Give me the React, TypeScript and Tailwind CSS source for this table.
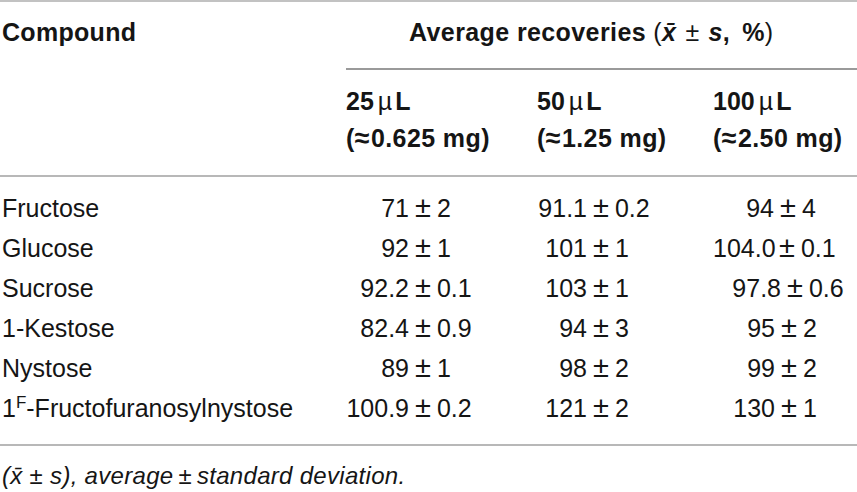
const font = { fontFamily: '"Liberation Sans", Arial, sans-serif' };

type Cell = { a: string; b: string; w: string };

const rows: { name: React.ReactNode; cells: Cell[] }[] = [
  {
    name: "Fructose",
    cells: [
      { a: "71", b: "2", w: "w-[63px]" },
      { a: "91.1", b: "0.2", w: "w-[50px]" },
      { a: "94", b: "4", w: "w-[61px]" },
    ],
  },
  {
    name: "Glucose",
    cells: [
      { a: "92", b: "1", w: "w-[63px]" },
      { a: "101", b: "1", w: "w-[50px]" },
      { a: "104.0", b: "0.1", w: "w-[60px]" },
    ],
  },
  {
    name: "Sucrose",
    cells: [
      { a: "92.2", b: "0.1", w: "w-[63px]" },
      { a: "103", b: "1", w: "w-[50px]" },
      { a: "97.8", b: "0.6", w: "w-[68px]" },
    ],
  },
  {
    name: "1-Kestose",
    cells: [
      { a: "82.4", b: "0.9", w: "w-[63px]" },
      { a: "94", b: "3", w: "w-[50px]" },
      { a: "95", b: "2", w: "w-[62px]" },
    ],
  },
  {
    name: "Nystose",
    cells: [
      { a: "89", b: "1", w: "w-[63px]" },
      { a: "98", b: "2", w: "w-[50px]" },
      { a: "99", b: "2", w: "w-[62px]" },
    ],
  },
  {
    name: (
      <>
        1<span className="relative top-[-9px] text-[17px]">F</span>-Fructofuranosylnystose
      </>
    ),
    cells: [
      { a: "100.9", b: "0.2", w: "w-[63px]" },
      { a: "121", b: "2", w: "w-[50px]" },
      { a: "130", b: "1", w: "w-[62px]" },
    ],
  },
];

function Value({ a, b, w }: Cell) {
  return (
    <div className="flex items-baseline">
      <span className={`${w} text-right`}>{a}</span>
      <span className="ml-[6px] mr-[6px] text-[29px] leading-none">±</span>
      <span>{b}</span>
    </div>
  );
}

function Volume({ v, mg }: { v: string; mg: string }) {
  return (
    <div className="font-bold">
      <div>
        {v}
        <span className="ml-[4px] mr-[3px] font-normal">µ</span>L
      </div>
      <div className="tracking-[0.4px]">
        (<span className="mr-[1px] text-[27px] leading-none">≈</span>
        {mg} mg)
      </div>
    </div>
  );
}

export default function App() {
  return (
    <div
      className="h-[492px] w-[857px] overflow-hidden bg-white text-[25px] text-[#151515]"
      style={font}
    >
      <div className="border-t-2 border-[#c2c2c2]">
        <div className="grid grid-cols-[346px_1fr]">
          <div className="pl-[2px] pt-[15px] font-bold leading-[30px] tracking-[0.3px]">
            Compound
          </div>
          <div>
            <div className="h-[66px] pl-[63px] pt-[15px] font-bold leading-[30px] tracking-[0.4px]">
              Average recoveries <span className="font-normal">(</span>
              <i>x̄</i>
              <span className="mx-[9px] font-normal">±</span>
              <i>s</i>,<span className="ml-[12px]">%</span>
              <span className="font-normal">)</span>
            </div>
            <div className="h-[2px] bg-[#9a9a9a]" />
            <div className="grid h-[105px] grid-cols-[191px_176px_1fr] pt-[13px] leading-[37px]">
              <Volume v="25" mg="0.625" />
              <Volume v="50" mg="1.25" />
              <Volume v="100" mg="2.50" />
            </div>
          </div>
        </div>
        <div className="h-[2px] bg-[#b8b8b8]" />
        <div className="h-[267px] pt-[11px] leading-[40px]">
          {rows.map((r, i) => (
            <div key={i} className="grid grid-cols-[346px_191px_176px_1fr]">
              <div className="pl-[2px]">{r.name}</div>
              {r.cells.map((c, j) => (
                <Value key={j} {...c} />
              ))}
            </div>
          ))}
        </div>
        <div className="h-[2px] bg-[#b8b8b8]" />
        <div className="pl-[2px] pt-[16px] text-[24px] italic leading-[28px] tracking-[0.3px]">
          (x̄<span className="mx-[7px]">±</span>s), average<span className="mx-[5px]">±</span>standard deviation.
        </div>
      </div>
    </div>
  );
}
